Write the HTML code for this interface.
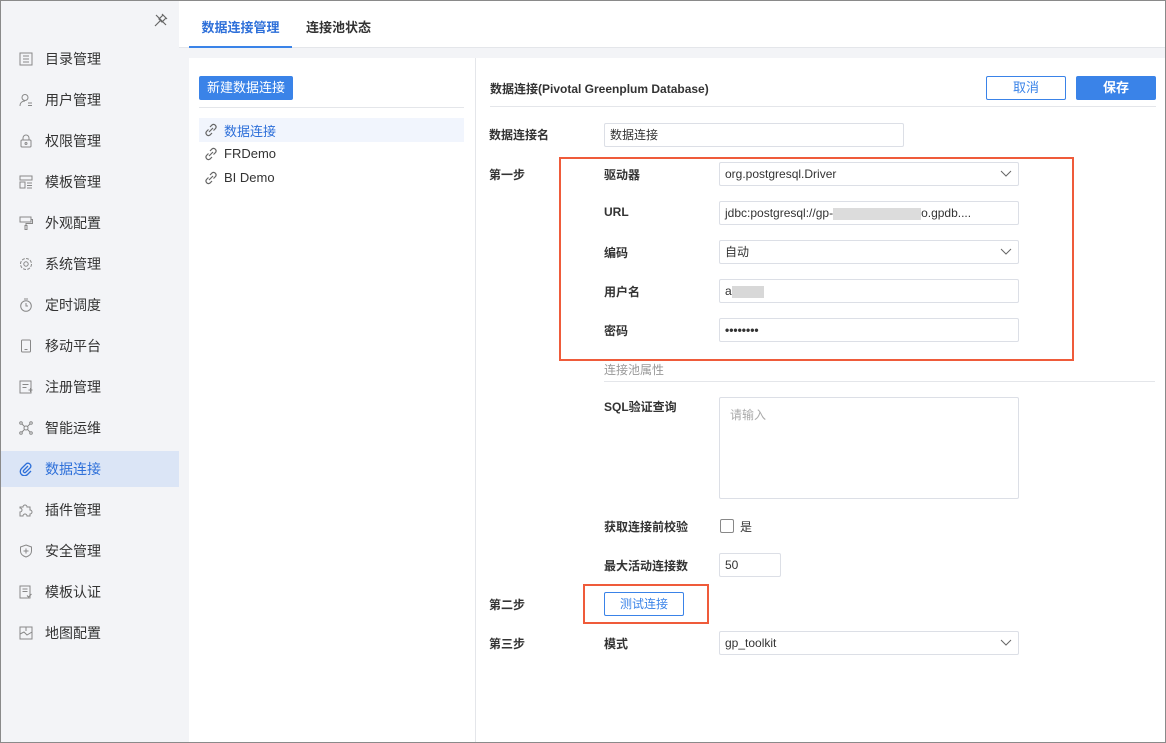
<!DOCTYPE html>
<html><head><meta charset="utf-8"><style>
*{box-sizing:border-box;margin:0;padding:0}
body{width:1166px;height:743px;overflow:hidden;font-family:"Liberation Sans","Noto Sans CJK SC",sans-serif;font-size:13px;color:#333;background:#fff;position:relative}
.frame{position:absolute;inset:0;border:1px solid #8a8a8a;pointer-events:none;z-index:9}
.side{position:absolute;left:0;top:0;width:179px;height:743px;background:#f3f4f7}
.item{position:absolute;left:0;width:179px;height:36px;line-height:36px;padding-left:45px;font-size:14px;color:#333}
.item svg{position:absolute;left:19px;top:11px}
.item.act{background:#dbe5f6;color:#2d6fd9}
.main{position:absolute;left:179px;top:0;right:0;bottom:0;background:#f3f4f7}
.tabs{position:absolute;left:0;top:0;right:0;height:48px;background:#fff;border-bottom:1px solid #e4e6ea}
.tab{position:absolute;top:0;height:48px;line-height:55px;font-size:13px;font-weight:bold;color:#333}
.lp{position:absolute;left:10px;top:58px;width:286px;bottom:0;background:#fff}
.rp{position:absolute;left:296px;top:58px;right:0;bottom:0;background:#fff;border-left:1px solid #e4e6ea}
.btn{position:absolute;height:24px;line-height:24px;text-align:center;font-size:13px;border-radius:2px}
.btn.o{line-height:22px}
.abs{position:absolute}
.lbl{position:absolute;font-size:12px;font-weight:bold;color:#333}
.inp{position:absolute;height:24px;border:1px solid #dcdfe6;border-radius:2px;font-size:12px;line-height:22px;padding-left:5px;color:#333;background:#fff}
.chev{position:absolute;right:6px;top:7px}
</style></head><body>
<div class="side">
<svg class="abs" style="left:154px;top:13px" width="14" height="14" viewBox="0 0 14 14" fill="none" stroke="#666" stroke-width="1.2"><path d="M8 1l5 5M9 2l-4 4 3 3 4-4M6.5 7.5L1 13M2 2l10 10"/></svg>
<div class="item" style="top:41px"><svg width="14" height="14" fill="none" stroke="#888"><rect x="1" y="1" width="12" height="12"/><path d="M4 4h6M4 7h6M4 10h6"/></svg>目录管理</div>
<div class="item" style="top:82px"><svg width="14" height="14" fill="none" stroke="#888"><circle cx="6" cy="4.5" r="3"/><path d="M1 13c0-4 3-5 5-5M9 10h4M9 12.5h4"/></svg>用户管理</div>
<div class="item" style="top:123px"><svg width="14" height="14" fill="none" stroke="#888"><rect x="2" y="6" width="10" height="7" rx="1"/><path d="M4 6V4a3 3 0 016 0v2"/><circle cx="7" cy="9.5" r="1"/></svg>权限管理</div>
<div class="item" style="top:164px"><svg width="14" height="14" fill="none" stroke="#888"><rect x="1" y="1" width="12" height="4"/><rect x="1" y="7" width="5" height="6"/><path d="M8 8h5M8 10.5h5M8 13h5"/></svg>模板管理</div>
<div class="item" style="top:205px"><svg width="14" height="14" fill="none" stroke="#888"><rect x="1" y="1" width="11" height="5"/><path d="M12 3.5h1.5v4H7v2M6 9.5h2v4H6z"/></svg>外观配置</div>
<div class="item" style="top:246px"><svg width="14" height="14" fill="none" stroke="#888"><circle cx="7" cy="7" r="2.2"/><circle cx="7" cy="7" r="5.5" stroke-dasharray="3 1.3"/></svg>系统管理</div>
<div class="item" style="top:287px"><svg width="14" height="14" fill="none" stroke="#888"><circle cx="7" cy="8" r="5.3"/><path d="M7 5v3h2M5 1h4"/></svg>定时调度</div>
<div class="item" style="top:328px"><svg width="14" height="14" fill="none" stroke="#888"><rect x="2.5" y="1" width="9" height="12" rx="1"/><path d="M5.5 10.5h3"/></svg>移动平台</div>
<div class="item" style="top:369px"><svg width="14" height="14" fill="none" stroke="#888"><rect x="1" y="1" width="11" height="12"/><path d="M3.5 4.5h6M3.5 7.5h4M9.5 10h4M11.5 8v4"/></svg>注册管理</div>
<div class="item" style="top:410px"><svg width="14" height="14" fill="none" stroke="#888"><circle cx="7" cy="7" r="2"/><circle cx="2" cy="2" r="1.3"/><circle cx="12" cy="2" r="1.3"/><circle cx="2" cy="12" r="1.3"/><circle cx="12" cy="12" r="1.3"/><path d="M3 3l2.5 2.5M11 3L8.5 5.5M3 11l2.5-2.5M11 11L8.5 8.5"/></svg>智能运维</div>
<div class="item act" style="top:451px"><svg width="14" height="14" fill="none" stroke="#2d6fd9" stroke-width="1.3"><path d="M9 4L4.5 8.5a1.5 1.5 0 002 2L11.5 5.5a3 3 0 00-4-4L2.5 6.5a4.2 4.2 0 006 6L12 9"/></svg>数据连接</div>
<div class="item" style="top:492px"><svg width="14" height="14" fill="none" stroke="#888"><path d="M1 4h3a2 2 0 014 0h3v3a2 2 0 010 4v2H8a2 2 0 00-4 0H1V9a2 2 0 000-4z"/></svg>插件管理</div>
<div class="item" style="top:533px"><svg width="14" height="14" fill="none" stroke="#888"><path d="M7 1l5.5 2v4c0 3-2.5 5-5.5 6C4 12 1.5 10 1.5 7V3z"/><path d="M7 4.5v5M4.5 7h5"/></svg>安全管理</div>
<div class="item" style="top:574px"><svg width="14" height="14" fill="none" stroke="#888"><rect x="1" y="1" width="10" height="12"/><path d="M3.5 4h5M3.5 6.5h5M8 10.5l1.5 1.5 3-3"/></svg>模板认证</div>
<div class="item" style="top:615px"><svg width="14" height="14" fill="none" stroke="#888"><rect x="1" y="1" width="12" height="12"/><path d="M1 8l4-2 3 3 5-3M7 1v4"/></svg>地图配置</div>
<div class="abs" style="left:181px;top:375px;width:4px;height:12px;border-left:2px dotted #999;border-right:2px dotted #999"></div>
</div>
<div class="main">
<div class="tabs">
<div class="tab" style="left:10px;width:103px;text-align:center;color:#2d6fd9;border-bottom:2px solid #3a83e8;height:48px">数据连接管理</div>
<div class="tab" style="left:127px">连接池状态</div>
</div>
<div class="lp">
<div class="btn" style="left:10px;top:18px;width:94px;background:#3a83e8;color:#fff">新建数据连接</div>
<div class="abs" style="left:10px;top:49px;width:265px;border-top:1px solid #e4e6ea"></div>
<div class="abs" style="left:10px;top:60px;width:265px;height:24px;background:#f1f5fd"></div>
<div class="abs" style="left:35px;top:63px;color:#2d6fd9">数据连接</div>
<div class="abs" style="left:35px;top:88px">FRDemo</div>
<div class="abs" style="left:35px;top:112px">BI Demo</div>
<svg class="abs" style="left:15px;top:65px" width="14" height="14" fill="none" stroke="#666" stroke-width="1.2"><path d="M6 4l2-2a2.5 2.5 0 013.5 3.5L9.5 7.5M8 10l-2 2a2.5 2.5 0 01-3.5-3.5L4.5 6.5M5 9l4-4"/></svg>
<svg class="abs" style="left:15px;top:89px" width="14" height="14" fill="none" stroke="#666" stroke-width="1.2"><path d="M6 4l2-2a2.5 2.5 0 013.5 3.5L9.5 7.5M8 10l-2 2a2.5 2.5 0 01-3.5-3.5L4.5 6.5M5 9l4-4"/></svg>
<svg class="abs" style="left:15px;top:113px" width="14" height="14" fill="none" stroke="#666" stroke-width="1.2"><path d="M6 4l2-2a2.5 2.5 0 013.5 3.5L9.5 7.5M8 10l-2 2a2.5 2.5 0 01-3.5-3.5L4.5 6.5M5 9l4-4"/></svg>
</div>
<div class="rp">
<div class="lbl" style="left:14px;top:22px">数据连接(Pivotal Greenplum Database)</div>
<div class="btn o" style="left:510px;top:18px;width:80px;border:1px solid #3a83e8;color:#3a83e8;background:#fff">取消</div>
<div class="btn" style="left:600px;top:18px;width:80px;background:#3a83e8;color:#fff;font-weight:bold">保存</div>
<div class="abs" style="left:14px;top:48px;width:666px;border-top:1px solid #e4e6ea"></div>
</div>
</div>
<div class="lbl" style="left:489px;top:126px">数据连接名</div>
<div class="inp" style="left:604px;top:123px;width:300px">数据连接</div>
<div class="lbl" style="left:489px;top:166px">第一步</div>
<div class="lbl" style="left:604px;top:166px">驱动器</div>
<div class="inp" style="left:719px;top:162px;width:300px">org.postgresql.Driver<svg class="chev" width="12" height="8" fill="none" stroke="#666"><path d="M1 1l5 5 5-5"/></svg></div>
<div class="lbl" style="left:604px;top:205px">URL</div>
<div class="inp" style="left:719px;top:201px;width:300px">jdbc:postgresql://gp-<span style="display:inline-block;width:88px;height:12px;background:#dcdcdc;vertical-align:middle"></span>o.gpdb....</div>
<div class="lbl" style="left:604px;top:244px">编码</div>
<div class="inp" style="left:719px;top:240px;width:300px">自动<svg class="chev" width="12" height="8" fill="none" stroke="#666"><path d="M1 1l5 5 5-5"/></svg></div>
<div class="lbl" style="left:604px;top:283px">用户名</div>
<div class="inp" style="left:719px;top:279px;width:300px">a<span style="display:inline-block;width:32px;height:12px;background:#d8d8d8;vertical-align:middle"></span></div>
<div class="lbl" style="left:604px;top:322px">密码</div>
<div class="inp" style="left:719px;top:318px;width:300px;font-weight:bold">••••••••</div>
<div class="abs" style="left:559px;top:157px;width:515px;height:204px;border:2px solid #ef5b3a"></div>
<div class="abs" style="left:604px;top:361px;font-size:12px;color:#999">连接池属性</div>
<div class="abs" style="left:604px;top:381px;width:551px;border-top:1px solid #e4e6ea"></div>
<div class="lbl" style="left:604px;top:398px">SQL验证查询</div>
<div class="inp" style="left:719px;top:397px;width:300px;height:102px;color:#aaa;padding-top:6px;padding-left:10px">请输入</div>
<div class="lbl" style="left:604px;top:518px">获取连接前校验</div>
<div class="abs" style="left:720px;top:519px;width:14px;height:14px;border:1px solid #888;border-radius:2px"></div>
<div class="abs" style="left:740px;top:518px;font-size:12px">是</div>
<div class="lbl" style="left:604px;top:557px">最大活动连接数</div>
<div class="inp" style="left:719px;top:553px;width:62px">50</div>
<div class="lbl" style="left:489px;top:596px">第二步</div>
<div class="btn o" style="left:604px;top:592px;width:80px;border:1px solid #3a83e8;color:#3a83e8;background:#fff;font-size:12px">测试连接</div>
<div class="abs" style="left:583px;top:584px;width:126px;height:40px;border:2px solid #ef5b3a"></div>
<div class="lbl" style="left:489px;top:635px">第三步</div>
<div class="lbl" style="left:604px;top:635px">模式</div>
<div class="inp" style="left:719px;top:631px;width:300px">gp_toolkit<svg class="chev" width="12" height="8" fill="none" stroke="#666"><path d="M1 1l5 5 5-5"/></svg></div>
<div class="frame"></div>
</body></html>
